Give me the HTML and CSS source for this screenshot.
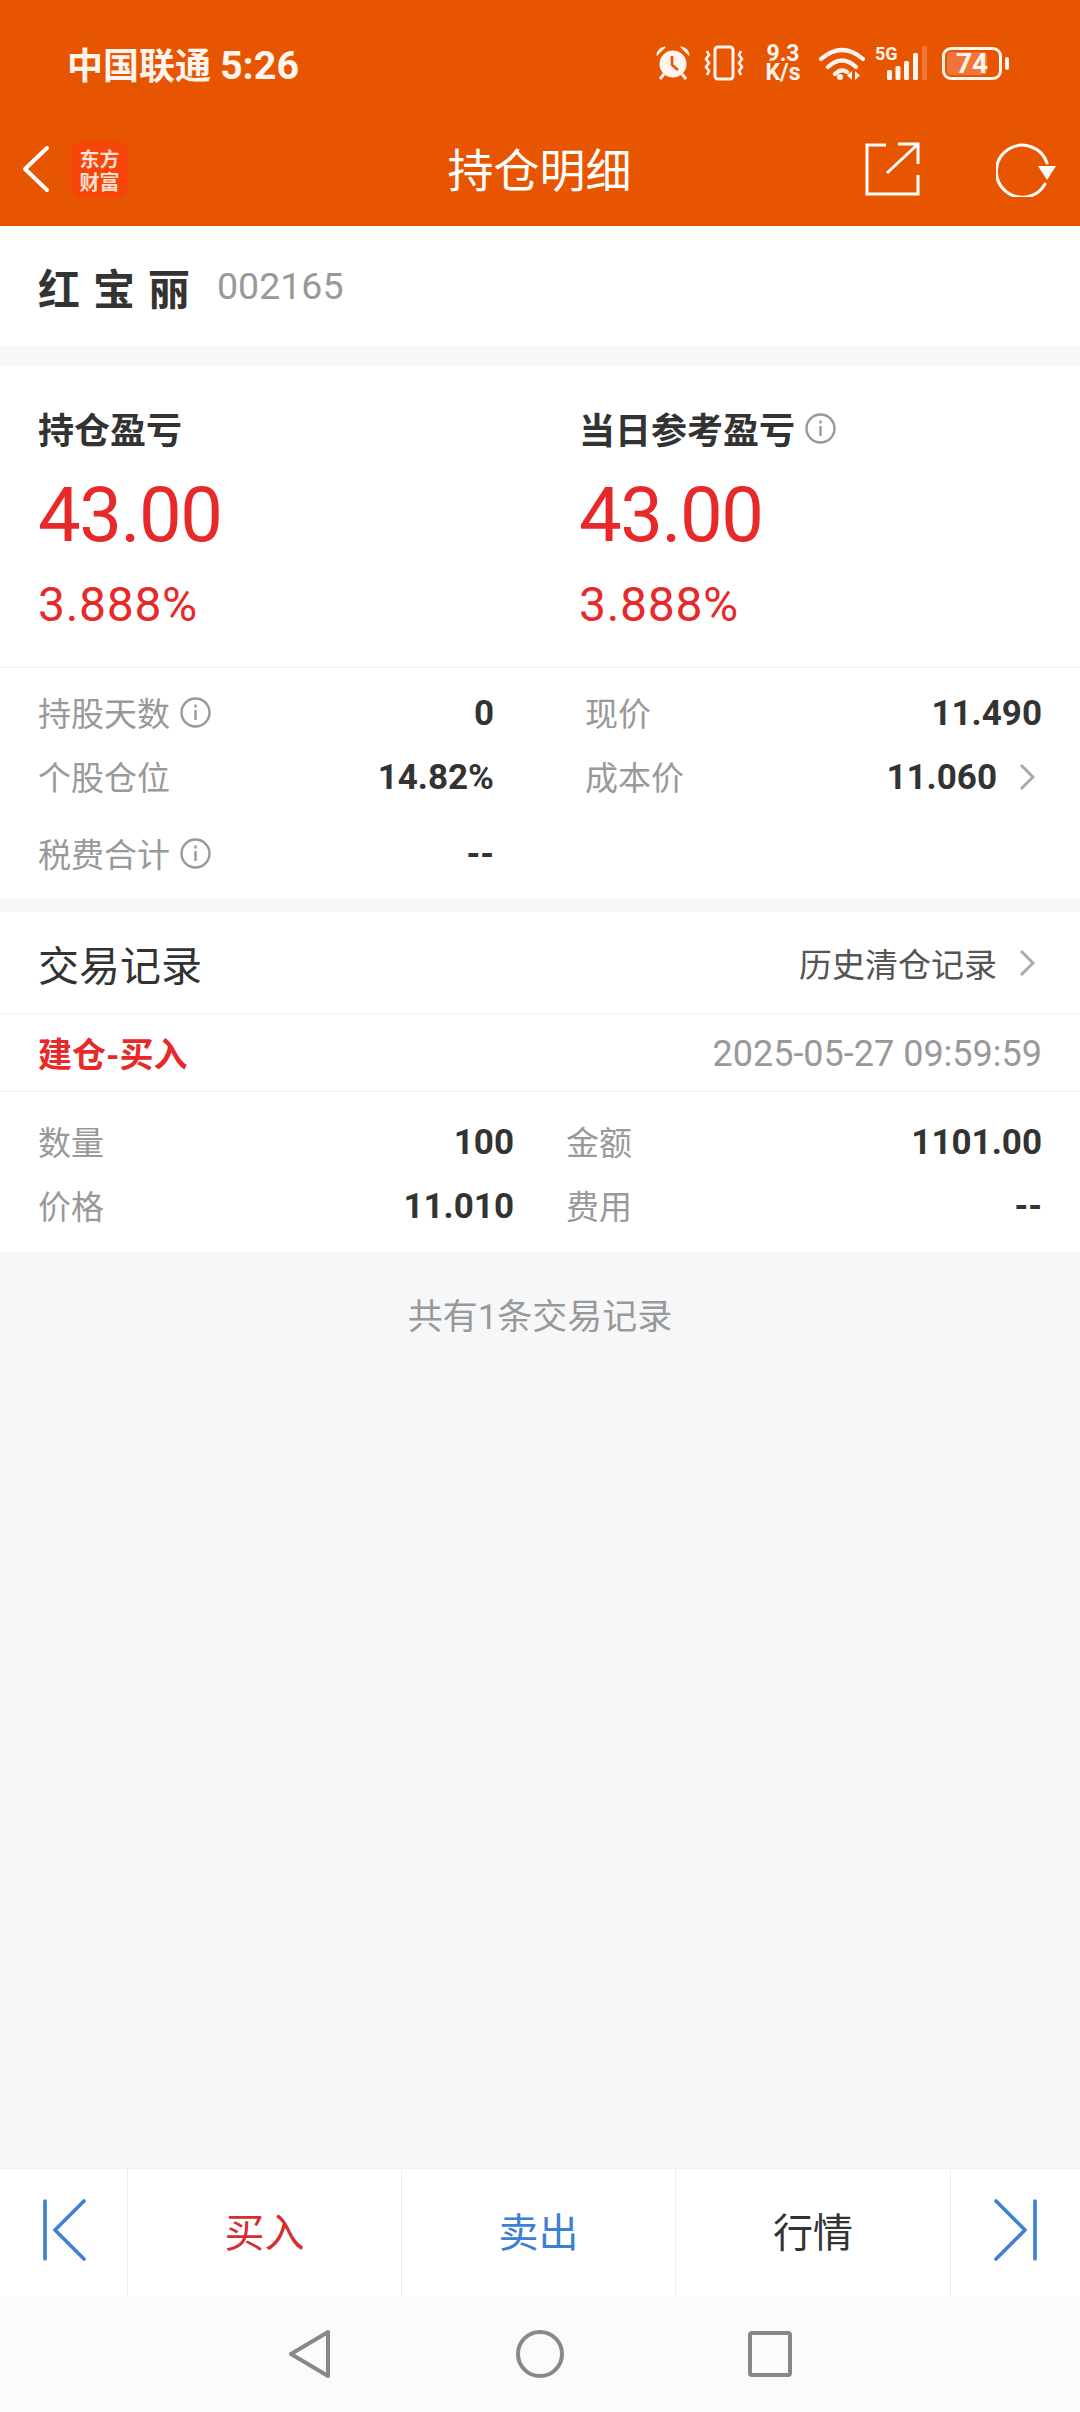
FILE: index.html
```html
<!DOCTYPE html>
<html lang="zh-CN">
<head>
<meta charset="UTF-8" />
<meta name="viewport" content="width=device-width, initial-scale=1.0"/>
<title>持仓明细</title>
<link rel="stylesheet" href="styles.css">
</head>
<body>
<header class="top">
  <div class="status">
    <div class="carrier">中国联通 <span class="clock">5:26</span></div>
    <div class="status-icons">
      <svg width="34" height="34" viewBox="0 0 34 34">
        <circle cx="17" cy="18" r="13.5" fill="#fff5ee"/>
        <path d="M16 10v9l6 5" fill="none" stroke="#e85500" stroke-width="2.6"/>
        <path d="M1 9Q2 2 9 1zM33 9Q32 2 25 1z" fill="#fff5ee" stroke="#fff5ee" stroke-width="1.2" stroke-linejoin="round"/>
        <path d="M8 28l-4 5M26 28l4 5" stroke="#fff5ee" stroke-width="3"/>
      </svg>
      <svg class="ic-vibrate" width="40" height="36" viewBox="0 0 40 36">
        <rect x="11" y="2" width="18" height="32" rx="3" fill="none" stroke="#fff5ee" stroke-width="3"/>
        <path d="M3 6l2 4-3 4 3 4-3 4 3 4-2 4M37 6l-2 4 3 4-3 4 3 4-3 4 2 4" fill="none" stroke="#fff5ee" stroke-width="2.6"/>
      </svg>
      <div class="speed"><div class="speed-line">9.3</div><div class="speed-line">K/s</div></div>
      <svg class="ic-wifi" width="46" height="34" viewBox="0 0 46 34">
        <path d="M2 13Q23-5 44 13M9 21Q23 8 37 21M16 28Q22 22 28 26" fill="none" stroke="#fff5ee" stroke-width="4.2" stroke-linecap="round"/>
        <circle cx="21" cy="31" r="3" fill="#fff5ee"/>
        <path d="M33 25v9l-5-4.5zM36 25v9l5-4.5z" fill="#fff5ee"/>
      </svg>
      <div class="signal">
        <span class="five-g">5G</span>
        <svg width="40" height="34" viewBox="0 0 40 34">
          <rect x="0" y="24" width="5" height="10" rx="1.5" fill="#fff5ee"/>
          <rect x="8.5" y="20" width="5" height="14" rx="1.5" fill="#fff5ee"/>
          <rect x="17" y="15" width="5" height="19" rx="1.5" fill="#fff5ee"/>
          <rect x="26" y="7" width="5" height="27" rx="1.5" fill="#fff5ee"/>
          <rect x="35" y="0" width="5" height="34" rx="1.5" fill="#f0753a"/>
        </svg>
      </div>
      <div class="battery">
        <div class="battery-body"><span class="battery-fill"></span><span class="battery-num">74</span></div>
        <span class="battery-nub"></span>
      </div>
    </div>
  </div>
  <div class="navbar">
    <div class="nav-left">
      <svg width="30" height="48" viewBox="0 0 30 48">
        <path d="M26 3L4 24l22 21" fill="none" stroke="#fff" stroke-width="4" stroke-linecap="round" stroke-linejoin="round"/>
      </svg>
      <div class="logo"><div class="logo-line">东方</div><div class="logo-line">财富</div></div>
    </div>
    <h1 class="title">持仓明细</h1>
    <div class="nav-right">
      <svg width="56" height="54" viewBox="0 0 56 54">
        <path d="M21 3H2v49h51V33" fill="none" stroke="#fff" stroke-width="3"/>
        <path d="M22 31L52 3M33 2h20v20" fill="none" stroke="#fff" stroke-width="3"/>
      </svg>
      <svg width="62" height="56" viewBox="0 0 62 56">
        <path d="M49 43A26 26 0 1 1 51 22" fill="none" stroke="#fff" stroke-width="3" stroke-linecap="round"/>
        <path d="M42 25h18l-9 14z" fill="#fff"/>
      </svg>
    </div>
  </div>
</header>

<section class="name-row">
  <span class="stock-name">红宝丽</span>
  <span class="stock-code">002165</span>
</section>

<section class="card">
  <div class="summary">
    <div>
      <div class="summary-label">持仓盈亏</div>
      <div class="summary-value">43.00</div>
      <div class="summary-pct">3.888%</div>
    </div>
    <div>
      <div class="summary-label">当日参考盈亏
        <svg width="31" height="31" viewBox="0 0 31 31"><circle cx="15.5" cy="15.5" r="14" fill="none" stroke="#999" stroke-width="2.4"/><path d="M15.5 13v10M15.5 7.500v3" stroke="#999" stroke-width="2.4"/></svg>
      </div>
      <div class="summary-value">43.00</div>
      <div class="summary-pct">3.888%</div>
    </div>
  </div>
  <div class="details">
    <div class="kv"><span class="k">持股天数
      <svg width="31" height="31" viewBox="0 0 31 31"><circle cx="15.5" cy="15.5" r="14" fill="none" stroke="#999" stroke-width="2.4"/><path d="M15.5 13v10M15.5 7.500v3" stroke="#999" stroke-width="2.4"/></svg></span><span class="v">0</span></div>
    <div class="kv"><span class="k">现价</span><span class="v">11.490</span></div>
    <div class="kv"><span class="k">个股仓位</span><span class="v">14.82%</span></div>
    <div class="kv"><span class="k">成本价</span><span class="v">11.060<svg class="chev" width="16" height="28" viewBox="0 0 16 28"><path d="M2 2l12 12L2 26" fill="none" stroke="#aaa" stroke-width="3"/></svg></span></div>
    <div class="kv kv-tax"><span class="k">税费合计
      <svg width="31" height="31" viewBox="0 0 31 31"><circle cx="15.5" cy="15.5" r="14" fill="none" stroke="#999" stroke-width="2.4"/><path d="M15.5 13v10M15.5 7.500v3" stroke="#999" stroke-width="2.4"/></svg></span><span class="v">--</span></div>
  </div>
</section>

<section class="card trades">
  <div class="trades-head">
    <span class="trades-title">交易记录</span>
    <span class="trades-link">历史清仓记录<svg class="chev" width="16" height="28" viewBox="0 0 16 28"><path d="M2 2l12 12L2 26" fill="none" stroke="#aaa" stroke-width="3"/></svg></span>
  </div>
  <div class="trade-row">
    <span class="trade-type">建仓-买入</span>
    <span class="trade-time">2025-05-27 09:59:59</span>
  </div>
  <div class="trade-data">
    <div class="kv"><span class="k">数量</span><span class="v">100</span></div>
    <div class="kv"><span class="k">金额</span><span class="v">1101.00</span></div>
    <div class="kv"><span class="k">价格</span><span class="v">11.010</span></div>
    <div class="kv"><span class="k">费用</span><span class="v">--</span></div>
  </div>
</section>

<main class="rest">
  <p class="total">共有1条交易记录</p>
</main>

<footer class="actions">
  <div class="action">
    <svg width="44" height="62" viewBox="0 0 44 62"><path d="M3 2v58M42 2L13 31l29 29" fill="none" stroke="#3d7fd1" stroke-width="3.6" stroke-linecap="round" stroke-linejoin="round"/></svg>
  </div>
  <div class="action buy">买入</div>
  <div class="action sell">卖出</div>
  <div class="action quote">行情</div>
  <div class="action">
    <svg width="44" height="62" viewBox="0 0 44 62"><path d="M41 2v58M2 2l29 29L2 60" fill="none" stroke="#3d7fd1" stroke-width="3.6" stroke-linecap="round" stroke-linejoin="round"/></svg>
  </div>
</footer>

<nav class="sysnav">
  <svg width="44" height="50" viewBox="0 0 44 50"><path d="M40 3v44L3 25z" fill="none" stroke="#888" stroke-width="4" stroke-linejoin="round"/></svg>
  <svg width="48" height="48" viewBox="0 0 48 48"><circle cx="24" cy="24" r="22" fill="none" stroke="#888" stroke-width="4"/></svg>
  <svg width="44" height="46" viewBox="0 0 44 46"><rect x="2" y="2" width="40" height="42" rx="2" fill="none" stroke="#888" stroke-width="4"/></svg>
</nav>
</body>
</html>
```

FILE: styles.css
```css
* {
  box-sizing: border-box;
}
body {
  margin: 0;
  height: 2412px;
  display: flex;
  flex-direction: column;
  background-color: #f6f7f9;
  color: #333;
  font-family: Roboto, "Noto Sans CJK SC", sans-serif;
}
.top {
  background-color: #e85500;
  color: #fff;
  height: 226px;
}
.status {
  height: 112px;
  padding: 14px 71px 0 67px;
  display: flex;
  align-items: center;
  justify-content: space-between;
}
.carrier {
  font-size: 36px;
  font-weight: 700;
  color: #fff5ee;
}
.clock {
  font-size: 39.5px;
}
.status-icons {
  display: flex;
  align-items: center;
}
.ic-vibrate {
  margin-left: 14px;
}
.speed {
  margin-left: 19px;
  width: 40px;
  font-size: 23px;
  font-weight: 700;
  text-align: center;
  color: #fff5ee;
}
.speed-line {
  height: 19px;
  line-height: 19px;
}
.ic-wifi {
  margin-left: 16px;
}
.signal {
  margin-left: 10px;
  position: relative;
  width: 52px;
  height: 34px;
  display: flex;
  justify-content: flex-end;
}
.five-g {
  position: absolute;
  left: 0;
  top: -3px;
  font-size: 18px;
  font-weight: 700;
  color: #fff5ee;
}
.battery {
  margin-left: 15px;
  display: flex;
  align-items: center;
}
.battery-body {
  position: relative;
  width: 60px;
  height: 33px;
  border: 3px solid #fff5ee;
  border-radius: 9px;
  display: flex;
  align-items: center;
  justify-content: center;
  overflow: hidden;
}
.battery-fill {
  position: absolute;
  left: 2px;
  top: 2px;
  bottom: 2px;
  width: 74%;
  background-color: #f0753a;
  border-radius: 4px;
}
.battery-num {
  position: relative;
  font-size: 28px;
  font-weight: 700;
  color: #fff5ee;
}
.battery-nub {
  width: 4px;
  height: 13px;
  margin-left: 3px;
  background-color: #fff5ee;
  border-radius: 2px;
}
.navbar {
  height: 114px;
  padding: 0 22px 0 21px;
  display: grid;
  grid-template-columns: 1fr auto 1fr;
  align-items: center;
}
.nav-left {
  display: flex;
  align-items: center;
}
.nav-right {
  display: flex;
  align-items: center;
  justify-content: flex-end;
  gap: 75px;
}
.logo {
  margin-left: 20px;
  width: 57px;
  height: 57px;
  background-color: #f5450a;
  border-radius: 12px;
  color: #ffdfd0;
  font-family: "Noto Sans CJK SC", sans-serif;
  font-size: 20px;
  font-weight: 700;
  text-align: center;
  padding-top: 6px;
}
.logo-line {
  height: 23px;
  line-height: 23px;
}
.title {
  margin: 0 0 5px;
  font-size: 46px;
  font-weight: 400;
  font-family: "Noto Sans CJK SC", sans-serif;
}
.name-row {
  height: 120px;
  background: #fff;
  padding: 0 38px;
  display: flex;
  align-items: center;
}
.stock-name {
  font-size: 42px;
  font-weight: 700;
  letter-spacing: 13px;
  color: #333;
}
.stock-code {
  margin-left: 14px;
  font-size: 37.5px;
  color: #999;
}
.card {
  background: #fff;
}
.name-row + .card {
  margin-top: 20px;
}
.summary {
  display: grid;
  grid-template-columns: 541px 1fr;
  padding: 32px 38px 29px;
  border-bottom: 1px solid #f2f2f2;
}
.summary-label {
  height: 60px;
  display: flex;
  align-items: center;
  gap: 10px;
  font-size: 36px;
  font-weight: 700;
  color: #333;
}
.summary-value {
  height: 114px;
  line-height: 114px;
  font-size: 76px;
  letter-spacing: -1.5px;
  color: #e8292a;
}
.summary-pct {
  height: 66px;
  line-height: 66px;
  font-size: 48px;
  letter-spacing: 0.7px;
  color: #e8292a;
}
.details {
  display: grid;
  grid-template-columns: 456px 457px;
  column-gap: 91px;
  padding: 12px 38px 14px;
}
.kv {
  height: 64px;
  display: flex;
  align-items: center;
  justify-content: space-between;
}
.kv-tax {
  margin-top: 13px;
}
.k {
  display: flex;
  align-items: center;
  gap: 10px;
  font-size: 33px;
  color: #999;
}
.v {
  display: flex;
  align-items: center;
  padding-top: 2px;
  font-size: 35px;
  font-weight: 700;
  color: #333;
}
.chev {
  margin-left: 22px;
  margin-right: 7px;
}
.trades {
  margin-top: 13px;
}
.trades-head {
  height: 102px;
  padding: 0 38px;
  display: flex;
  align-items: center;
  justify-content: space-between;
  border-bottom: 1px solid #f2f2f2;
}
.trades-title {
  font-size: 41px;
  color: #333;
}
.trades-link {
  display: flex;
  align-items: center;
  font-size: 33px;
  color: #555;
}
.trade-row {
  height: 78px;
  padding: 0 38px;
  display: flex;
  align-items: center;
  justify-content: space-between;
  border-bottom: 1px solid #f2f2f2;
}
.trade-type {
  font-size: 34px;
  font-weight: 700;
  color: #e8292a;
}
.trade-time {
  padding-top: 2px;
  font-size: 36px;
  color: #999;
}
.trade-data {
  display: grid;
  grid-template-columns: 476px 476px;
  column-gap: 52px;
  padding: 17px 38px 15px;
}
.rest {
  flex: 1;
  padding-top: 36px;
}
.total {
  margin: 0;
  line-height: 60px;
  text-align: center;
  font-size: 35px;
  color: #999;
}
.actions {
  height: 128px;
  background: #fff;
  border-top: 1px solid #eee;
  display: grid;
  grid-template-columns: 128px 274px 274px 275px 1fr;
}
.action {
  display: flex;
  align-items: center;
  justify-content: center;
  padding-bottom: 5px;
  border-right: 1px solid #eee;
  font-size: 40px;
  font-family: "Noto Sans CJK SC", sans-serif;
}
.action:last-child {
  border-right: none;
}
.buy {
  color: #d32f2f;
}
.sell {
  color: #3d7fd1;
}
.quote {
  color: #333;
}
.sysnav {
  height: 116px;
  padding-left: 288px;
  background-color: #fbfbfb;
  display: flex;
  align-items: center;
  gap: 184px;
}
```
